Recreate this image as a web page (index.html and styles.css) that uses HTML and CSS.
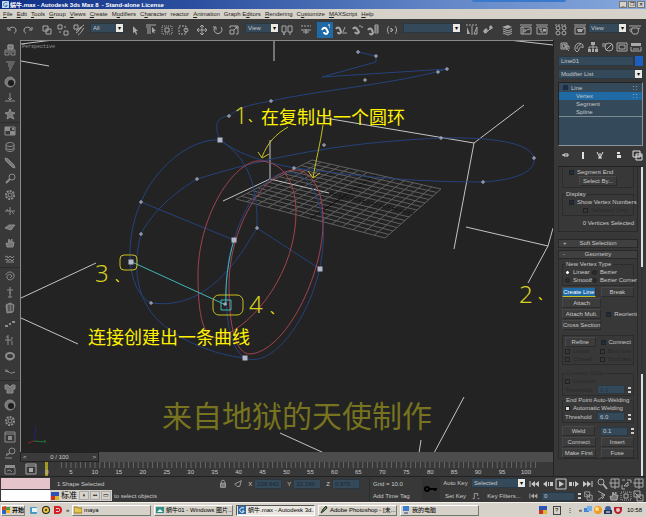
FILE: index.html
```html
<!DOCTYPE html>
<html lang="zh-CN">
<head>
    <meta charset="UTF-8">
    <meta name="viewport" content="width=device-width, initial-scale=1.0">
    <title>蜗牛.max - Autodesk 3ds Max 8</title>
    <link rel="stylesheet" href="styles.css">
</head>
<body>
    <svg class="sprite" aria-hidden="true">
        <symbol id="i-undo" viewBox="0 0 12 12"><path d="M3 5 C5 2 10 3 10 6 C10 8 9 9 8 9 M2 3 V6 H5"/></symbol>
        <symbol id="i-redo" viewBox="0 0 12 12"><path d="M9 5 C7 2 2 3 2 6 C2 8 3 9 4 9 M10 3 V6 H7"/></symbol>
        <symbol id="i-link" viewBox="0 0 12 12"><path d="M2 2 H7 V7 H2Z M5 5 H10 V10 H5Z"/></symbol>
        <symbol id="i-unlink" viewBox="0 0 12 12"><path d="M1 1 H5 V5 H1Z M7 7 H11 V11 H7Z M7 3 L9 3 M3 7 V9"/></symbol>
        <symbol id="i-bind" viewBox="0 0 12 12"><path d="M1 1 H5 V5 H1Z M11 1 C8 2 9 4 7 5 C5 6 6 8 3 9 M11 4 C9 5 10 7 8 8 C7 9 7 10 5 11 M8 3 L3 7"/></symbol>
        <symbol id="i-cursor" viewBox="0 0 12 12"><path class="fill" d="M4 2 L9 7 H7 L8 10 L7 11 L6 8 L4 9Z"/></symbol>
        <symbol id="i-byname" viewBox="0 0 12 12"><path d="M1 1 H11 M1 3 H6 M2 5 H6 M2 7 H6 M2 9 H6"/><path class="fill" d="M7 3 L11 7 L9 7 L10 10 L8 8 L7 9Z"/></symbol>
        <symbol id="i-region" viewBox="0 0 12 12"><path stroke-dasharray="1 1" d="M1 2 H11 V10 H1Z"/><path d="M4 4 H8 V8 H4Z"/></symbol>
        <symbol id="i-window" viewBox="0 0 12 12"><path stroke-dasharray="2 1" d="M2 2 H9 V10 H2Z"/><circle cx="9" cy="6" r="2"/></symbol>
        <symbol id="i-move" viewBox="0 0 12 12"><path d="M6 1 V11 M1 6 H11 M4 3 L6 1 L8 3 M4 9 L6 11 L8 9 M3 4 L1 6 L3 8 M9 4 L11 6 L9 8"/></symbol>
        <symbol id="i-rotate" viewBox="0 0 12 12"><path d="M3 3 A4 4 0 1 0 9 3 M1 3 H4 V6"/></symbol>
        <symbol id="i-scale" viewBox="0 0 12 12"><path d="M2 6 H6 V10 H2Z M2 4 V2 H10 V10 H8 M6 6 L9 3 M7 3 H9 V5"/></symbol>
        <symbol id="i-pivot" viewBox="0 0 12 12"><path d="M1 2 H5 V8 H1Z M7 2 H11 V8 H7Z M3 8 V11 M9 8 V11 M2 10 H4"/></symbol>
        <symbol id="i-manip" viewBox="0 0 12 12"><path stroke-dasharray="2 1" d="M1 2 H11"/><path d="M1 6 H11 M3 8 H9 M6 5 V10"/></symbol>
        <symbol id="i-snap" viewBox="0 0 12 12"><path class="thick" d="M3 6 C4 3 7 3 8 6 L9 8 C8 11 5 10 5 8"/><path d="M9 1 H11 M10 3 H11"/></symbol>
        <symbol id="i-angle" viewBox="0 0 12 12"><path class="thick" d="M1 5 C2 3 4 3 5 5 L6 8 C5 10 3 10 3 8"/><path d="M7 9 H12 M8 8 L10 3"/></symbol>
        <symbol id="i-percent" viewBox="0 0 12 12"><path class="thick" d="M2 5 C3 3 5 3 6 5 L8 8 C7 10 5 10 4 8"/><path d="M9 1 V3 M11 2 V4"/></symbol>
        <symbol id="i-spinsnap" viewBox="0 0 12 12"><path class="thick" d="M1 6 C2 4 4 4 5 6 L6 9 C5 11 3 11 3 9"/><path d="M8 1 H11 V9 H8Z M8 3 H11 M8 5 H11 M8 7 H11"/></symbol>
        <symbol id="i-sets" viewBox="0 0 12 12"><path d="M3 2 C1 4 1 8 3 10 M9 2 C11 4 11 8 9 10 M5 4 V8 L7 6Z"/></symbol>
        <symbol id="i-mirror" viewBox="0 0 12 12"><path stroke-dasharray="2 1" d="M0 1 H12"/><path d="M6 2 V11 M11 3 V10 H8Z"/><path class="fill" d="M1 3 V10 H4Z"/></symbol>
        <symbol id="i-align" viewBox="0 0 12 12"><path class="fill" d="M1 7 L4 4 L6 6 L3 10Z M7 3 L9 1 L11 4 L8 6Z"/><path d="M4 9 L8 5"/></symbol>
        <symbol id="i-layers" viewBox="0 0 12 12"><path class="fill" d="M1 3 L7 1 L11 3 L6 5Z"/><path d="M2 5 L7 7 L11 5 M2 7 L7 9 L11 7 M2 9 L7 11 L11 9"/></symbol>
        <symbol id="i-curves" viewBox="0 0 12 12"><path d="M0 1 H12 M1 3 H11 V10 H1Z M3 3 V10 M3 8 C6 8 6 5 10 5 M3 6 H6"/></symbol>
        <symbol id="i-schem" viewBox="0 0 12 12"><path d="M0 1 H12 M1 3 H11 V10 H1Z M3 5 H6 M7 7 H10 M5 5 V8 H7"/><path class="fill" d="M7 5 H10 V7 H7Z"/></symbol>
        <symbol id="i-mtl" viewBox="0 0 12 12"><path stroke-dasharray="2 1" d="M0 1 H12"/><circle cx="3" cy="4" r="2"/><circle cx="9" cy="4" r="2"/><circle cx="3" cy="9" r="2"/><circle cx="9" cy="9" r="2"/></symbol>
        <symbol id="i-render" viewBox="0 0 12 12"><path d="M0 1 H12 M1 3 H11 V10 H1Z M9 5 L11 4"/><path class="fill" d="M3 5 H9 L8 8 H4Z"/></symbol>
        <symbol id="i-teapot" viewBox="0 0 12 12"><path d="M0 2 H12 M3 4 H9 C10 7 9 9 8 10 H4 C3 9 2 7 3 4Z M9 5 L11 4 M3 5 C0 4 0 8 3 8"/></symbol>
        <symbol id="i-cubes" viewBox="0 0 12 12"><path class="soft" d="M4 1 H9 V5 H4Z"/><path d="M4 1 H9 V5 H4Z M1 6 H5 V11 H1Z M7 6 H11 V11 H7Z M2 8 H4 M8 8 H10"/></symbol>
        <symbol id="i-flag" viewBox="0 0 12 12"><path d="M2 2 H11 M4 4 H10 M4 6 H9 M5 8 H8 M5 10 H7"/></symbol>
        <symbol id="i-ball" viewBox="0 0 12 12"><circle class="soft" cx="6" cy="6" r="5"/><circle class="dark" cx="7" cy="7" r="3"/></symbol>
        <symbol id="i-pin" viewBox="0 0 12 12"><path d="M6 1 V8 M1 9 H11 M4 6 L6 8 L8 6"/></symbol>
        <symbol id="i-star" viewBox="0 0 12 12"><path class="soft" d="M6 1 L7 4 L11 5 L8 7 L10 11 L6 9 L3 11 L4 7 L1 5 L5 4Z"/></symbol>
        <symbol id="i-tiles" viewBox="0 0 12 12"><path d="M1 2 H11 V10 H1Z"/><path class="fill" d="M1 2 H6 V6 H1Z M6 6 H11 V10 H6Z M8 3 H10 V5 H8Z"/></symbol>
        <symbol id="i-barrel" viewBox="0 0 12 12"><path d="M2 3 C4 1 9 1 10 3 V9 C8 11 4 11 2 9Z M2 4 C4 6 8 6 10 4 M2 7 C4 9 8 9 10 7"/></symbol>
        <symbol id="i-brush" viewBox="0 0 12 12"><path class="soft" d="M1 1 L4 2 L10 8 L11 11 L8 10 L2 4Z"/></symbol>
        <symbol id="i-wrench" viewBox="0 0 12 12"><circle cx="8" cy="4" r="3"/><path class="thick" d="M6 6 L2 10"/></symbol>
        <symbol id="i-gear" viewBox="0 0 12 12"><circle class="thick" stroke-dasharray="2 1" cx="6" cy="6" r="4"/><circle cx="6" cy="6" r="2"/></symbol>
        <symbol id="i-axis" viewBox="0 0 12 12"><path d="M1 6 H11 M6 2 V10 M3 4 L4 6 M8 7 L10 9"/></symbol>
        <symbol id="i-leaf" viewBox="0 0 12 12"><path class="soft" d="M1 7 L5 4 H11 L7 9Z"/></symbol>
        <symbol id="i-hand" viewBox="0 0 12 12"><path class="soft" d="M3 10 L2 6 L4 7 L5 2 L6 5 L8 2 L8 6 L10 5 L9 10Z"/></symbol>
        <symbol id="i-wave" viewBox="0 0 12 12"><path d="M1 4 L3 3 L4 5 L6 3 L8 5 L10 3 M1 7 L3 6 L4 8 L6 6 L8 8 L10 6 M2 9 H10"/></symbol>
        <symbol id="i-spiral" viewBox="0 0 12 12"><path d="M2 5 C3 1 9 1 10 5 C11 9 5 12 3 8 C2 5 7 3 8 6 L6 8"/></symbol>
        <symbol id="i-figure" viewBox="0 0 12 12"><path d="M6 1 V11 M3 4 H9 M5 7 H7 M4 11 H8"/></symbol>
        <symbol id="i-cloth" viewBox="0 0 12 12"><path class="soft" d="M2 3 L6 1 L10 3 L9 10 L3 11Z"/><path class="edge" d="M5 3 L5 9 M8 3 V9"/></symbol>
        <symbol id="i-dots" viewBox="0 0 12 12"><path class="fill" d="M1 7 H4 V9 H1Z M5 5 H7 V7 H5Z M8 3 H11 V5 H8Z"/></symbol>
        <symbol id="i-joint" viewBox="0 0 12 12"><path d="M4 1 V11 M1 6 H8 M8 3 V5 M8 7 V11 M2 3 H4"/></symbol>
        <symbol id="i-ring" viewBox="0 0 12 12"><ellipse class="thick" cx="6" cy="6" rx="4" ry="3"/><path d="M3 9 C5 11 9 10 10 7"/></symbol>
        <symbol id="i-rope" viewBox="0 0 12 12"><path d="M1 4 C4 3 5 8 8 7 L11 6 M1 5 L5 6"/></symbol>
        <symbol id="i-shirt" viewBox="0 0 12 12"><path class="soft" d="M1 2 H4 L6 4 L8 2 H11 V6 H9 V10 H3 V6 H1Z"/></symbol>
        <symbol id="i-preview" viewBox="0 0 12 12"><path d="M1 1 H11 V11 H1Z M1 3 H11"/><path class="fill" d="M4 5 H8 V9 H4Z"/></symbol>
        <symbol id="i-search" viewBox="0 0 12 12"><circle cx="8" cy="4" r="3"/><path d="M6 6 L2 9 M1 11 H8 M2 7 H5"/></symbol>
        <symbol id="i-photo" viewBox="0 0 12 12"><path class="fill" d="M1 2 H11 V5 H1Z"/><path d="M1 5 V11 H11 V5 M3 8 L6 7 L8 9"/></symbol>
        <symbol id="i-create" viewBox="0 0 12 12"><path d="M2 2 H8 V8 H2Z M5 4 L10 10 M7 5 H10 V8"/><circle cx="5" cy="5" r="2"/></symbol>
        <symbol id="i-modify" viewBox="0 0 12 12"><path d="M2 9 C1 3 6 0 10 4 L10 7 C8 5 6 6 6 9 L4 11Z M4 8 C4 5 6 3 8 4"/></symbol>
        <symbol id="i-hier" viewBox="0 0 12 12"><path class="fill" d="M4 1 H8 V4 H4Z M1 8 H4 V11 H1Z M5 8 H7 V11 H5Z M8 8 H11 V11 H8Z"/><path d="M6 4 V8 M2 8 V6 H10 V8"/></symbol>
        <symbol id="i-motion" viewBox="0 0 12 12"><circle cx="7" cy="6" r="4"/><path d="M4 9 L10 3 M0 3 H4 M0 5 H3"/></symbol>
        <symbol id="i-display" viewBox="0 0 12 12"><path d="M1 2 H11 V10 H1Z M3 4 H9 V8 H3Z"/></symbol>
        <symbol id="i-util" viewBox="0 0 12 12"><path class="fill" d="M1 2 H11 V5 H1Z"/><path d="M1 6 V10 H11 V6 M3 8 H9"/></symbol>
        <symbol id="i-pinstack" viewBox="0 0 12 12"><path d="M3 6 H5 M5 5 H9 V7 H5Z"/></symbol>
        <symbol id="i-tube" viewBox="0 0 12 12"><path class="thick" d="M6 3 V10"/></symbol>
        <symbol id="i-unique" viewBox="0 0 12 12"><path d="M2 3 L5 9 L8 3 M5 4 V9 M3 9 H7"/></symbol>
        <symbol id="i-trash" viewBox="0 0 12 12"><path class="fill" d="M4 3 H7 V5 H4Z M4 6 H8 V9 H4Z"/></symbol>
        <symbol id="i-config" viewBox="0 0 12 12"><path d="M2 2 H9 V8 H2Z M5 5 H11 V11 H5Z M5 7 H11"/></symbol>
        <symbol id="i-first" viewBox="0 0 12 12"><path d="M1 3 V9"/><path class="fill" d="M2 6 L6 3 V9Z M6 6 L10 3 V9Z"/></symbol>
        <symbol id="i-prev" viewBox="0 0 12 12"><path class="fill" d="M1 6 L5 3 V9Z M6 4 H7 V8 H6Z M8 4 H11 V8 H8Z"/></symbol>
        <symbol id="i-play" viewBox="0 0 12 12"><path d="M1 1 H11 V11 H1Z"/><path class="fill" d="M4 3 L9 6 L4 9Z"/></symbol>
        <symbol id="i-next" viewBox="0 0 12 12"><path class="fill" d="M11 6 L7 3 V9Z M5 4 H6 V8 H5Z M1 4 H4 V8 H1Z"/></symbol>
        <symbol id="i-last" viewBox="0 0 12 12"><path d="M11 3 V9"/><path class="fill" d="M10 6 L6 3 V9Z M6 6 L2 3 V9Z"/></symbol>
        <symbol id="i-zoom" viewBox="0 0 12 12"><circle cx="5" cy="4" r="3"/><path class="thick" d="M7 6 L11 11"/></symbol>
        <symbol id="i-zoomall" viewBox="0 0 12 12"><path d="M3 1 H11 V9 H3Z M7 1 V11 M1 5 H11"/></symbol>
        <symbol id="i-extents" viewBox="0 0 12 12"><path d="M2 2 H5 M7 2 H11 V5 M2 7 V11 H5 M4 8 L8 4 V8Z"/></symbol>
        <symbol id="i-fov" viewBox="0 0 12 12"><path d="M2 1 L9 5 L2 10 M9 5 L5 5 M6 9 L8 7"/></symbol>
        <symbol id="i-abs" viewBox="0 0 12 12"><path d="M2 6 L10 2 L8 9 L5 9Z"/></symbol>
        <symbol id="i-tangent" viewBox="0 0 12 12"><path d="M2 9 H4 V3 H8 V6 M8 9 L10 9"/></symbol>
        <symbol id="i-minmax" viewBox="0 0 12 12"><path d="M2 1 H8 V7 H2Z M5 5 H11 V11 H5Z M3 3 L9 9"/></symbol>
        <symbol id="i-lock" viewBox="0 0 12 12"><path d="M4 5 V3 C4 1 8 1 8 3 V5"/><path class="soft" d="M3 5 H9 V10 H3Z"/></symbol>
    </svg>

    <header class="titlebar">
        <svg class="app-icon" viewBox="0 0 8 8"><rect width="8" height="8" rx="1" fill="#c7dcf0"/><path d="M6 2 C3 1 1 3 2 5 C3 7 6 7 6 5 H4" fill="none" stroke="#1b6aa0"/></svg>
        <h1>蜗牛.max - Autodesk 3ds Max 8 &nbsp;- Stand-alone License</h1>
        <span class="dock"></span>
        <div class="win-buttons">
            <button aria-label="Minimize">_</button>
            <button aria-label="Restore">❐</button>
            <button aria-label="Close">✕</button>
        </div>
    </header>

    <nav class="menubar">
        <button><u>F</u>ile</button>
        <button><u>E</u>dit</button>
        <button><u>T</u>ools</button>
        <button><u>G</u>roup</button>
        <button><u>V</u>iews</button>
        <button><u>C</u>reate</button>
        <button>M<u>o</u>difiers</button>
        <button>C<u>h</u>aracter</button>
        <button>reactor</button>
        <button><u>A</u>nimation</button>
        <button>Graph E<u>d</u>itors</button>
        <button><u>R</u>endering</button>
        <button>C<u>u</u>stomize</button>
        <button><u>M</u>AXScript</button>
        <button><u>H</u>elp</button>
    </nav>

    <div class="toolbar">
        <div class="tools" data-icons="undo redo"></div>
        <div class="tools" data-icons="link unlink bind"></div>
        <div class="combo combo-s"><select aria-label="Selection filter"><option>All</option></select></div>
        <div class="tools" data-icons="cursor byname region window"></div>
        <div class="tools" data-icons="move rotate scale"></div>
        <div class="tools">
            <div class="combo combo-s"><select aria-label="Reference coordinate system"><option>View</option></select></div>
            <button class="tool" aria-label="pivot"><svg><use href="#i-pivot"/></svg></button>
        </div>
        <div class="tools" data-icons="manip"></div>
        <div class="tools" data-icons="snap angle percent spinsnap" data-active="snap"></div>
        <div class="tools" data-icons="sets"></div>
        <div class="combo combo-l"><select aria-label="Named selection sets"><option></option></select></div>
        <div class="tools" data-icons="mirror align"></div>
        <div class="tools" data-icons="layers"></div>
        <div class="tools" data-icons="curves schem"></div>
        <div class="tools" data-icons="mtl"></div>
        <div class="tools">
            <button class="tool" aria-label="render"><svg><use href="#i-render"/></svg></button>
            <div class="combo combo-m"><select aria-label="Render type"><option>View</option></select></div>
            <button class="tool" aria-label="quick render"><svg><use href="#i-teapot"/></svg></button>
        </div>
    </div>

    <main class="workspace">
        <aside class="reactor-bar">
            <div class="tools" data-icons="cubes flag ball pin star"></div>
            <div class="tools" data-icons="tiles barrel brush wrench gear axis leaf hand wave"></div>
            <div class="tools" data-icons="spiral figure cloth dots joint ring rope"></div>
            <div class="tools" data-icons="shirt ball gear preview search photo"></div>
        </aside>

        <section class="center">
            <svg class="viewport" viewBox="21 41 532 412" preserveAspectRatio="xMinYMin slice">
                <text class="view-label" x="22" y="48">Perspective</text>
                <g id="grid" class="grid"></g>
                <path class="white" d="M21 44 L53 40 M21 61 L49 66 M274 40 V61 M270 140 V179 M223 201 L270 179 L329 193 M325 118 L474 143 L454 249 M474 143 L524 105 M500 39 L553 45 M466 227 L548 246 L553 228 M548 246 L528 283 M21 298 L96 263 M21 318 L78 344 M280 433 L324 453 M464 397 L434 453 M421 440 L419 453"/>
                <path class="blue" d="M220 140 C190 138 155 168 141 202 C124 240 126 290 151 303 M220 140 C212 122 220 116 229 116 C240 106 255 104 271 101 C320 90 395 84 447 69 L322 77 L376 62 L376 56 L358 52 M220 140 C240 156 270 163 294 168 C340 173 395 182 483 182 C515 180 536 172 534 158 C530 142 490 137 441 138 C380 141 300 147 197 179 C165 198 148 220 141 234 C130 275 140 310 170 330 C195 348 225 356 245 358"/>
                <path class="blue" d="M220 140 C245 156 258 180 257 228 L320 269 M257 228 C235 265 205 310 151 303 M141 202 L234 240 M245 358 C222 345 222 270 234 240 C242 210 260 184 275 176 C305 160 330 200 322 255 C315 310 275 370 245 358"/>
                <path class="red" d="M257 161 C230 165 198 220 198 275 C198 315 203 342 220 337 C255 325 297 270 296 210 C295 178 280 160 257 161Z M294 170 C262 172 229 230 229 285 C229 325 235 354 250 354 C285 352 324 275 323 220 C323 190 312 170 294 170Z"/>
                <path class="cyan" d="M132 262 L226 305 M234 240 C228 260 225 285 226 305 M221 300 H231 V310 H221Z"/>
                <g id="knots" class="knots"></g>
                <path class="pen" d="M288 127 C276 134 268 142 262 157 M258 152 L262 158 L269 154 M323 125 C320 145 316 160 313 178 M308 171 L313 178 L320 173"/>
                <rect class="pen" x="120" y="255" width="17" height="15" rx="4"/>
                <rect class="pen" x="213" y="295" width="30" height="20" rx="6"/>
                <text class="hand" x="234" y="124">1</text>
                <text class="mark" x="248" y="122">、</text>
                <text class="note" x="261" y="124">在复制出一个圆环</text>
                <text class="hand" x="519" y="303">2</text>
                <text class="mark" x="538" y="300">、</text>
                <text class="hand" x="95" y="282">3</text>
                <text class="mark" x="115" y="282">、</text>
                <text class="hand" x="249" y="313">4</text>
                <text class="mark" x="270" y="314">、</text>
                <text class="note" x="88" y="344">连接创建出一条曲线</text>
                <text class="credit" x="162" y="427">来自地狱的天使制作</text>
                <path d="M34 441 L36 426" stroke="#22227a"/><path d="M34 441 L46 442 L44 440" stroke="#1f7a35" fill="none"/><path d="M34 441 L28 443" stroke="#8c2020"/>
            </svg>
            <div class="time-slider">
                <div class="slider-thumb"><button aria-label="Previous frame">&lt;</button><span>0 / 100</span><button aria-label="Next frame">&gt;</button></div>
            </div>
            <div class="trackbar">
                <button class="tool" aria-label="Mini curve editor"><svg><use href="#i-preview"/></svg></button>
                <div id="ruler" class="ruler"></div>
            </div>
        </section>

        <aside class="panel">
            <div class="tools tabs" data-icons="create modify hier motion display util"></div>
            <div class="name-row">
                <input class="field" type="text" value="Line01" aria-label="Object name">
                <button class="swatch" aria-label="Object color"></button>
            </div>
            <div class="combo"><select aria-label="Modifier list"><option>Modifier List</option></select></div>
            <ul class="stack">
                <li><span class="expand"></span>Line<i>∷</i></li>
                <li class="sub active">Vertex<i>∷</i></li>
                <li class="sub">Segment</li>
                <li class="sub">Spline</li>
            </ul>
            <div class="tools stack-tools" data-icons="pinstack tube unique trash config"></div>
            <div class="rollouts">
                <div class="rollout-list">
                    <div class="rollout selection">
                        <div class="group open">
                            <label class="check"><input type="checkbox">Segment End</label>
                            <button class="btn select-by">Select By...</button>
                        </div>
                        <fieldset class="group">
                            <legend>Display</legend>
                            <label class="check"><input type="checkbox">Show Vertex Numbers</label>
                            <label class="check indent off"><input type="checkbox" disabled>Selected Only</label>
                        </fieldset>
                        <p class="count">0 Vertices Selected</p>
                    </div>
                    <button class="rollout-head"><span>+</span>Soft Selection</button>
                    <button class="rollout-head"><span>-</span>Geometry</button>
                    <div class="rollout geometry">
                        <fieldset class="group">
                            <legend>New Vertex Type</legend>
                            <div class="pair">
                                <label class="check"><input type="radio" name="vt" checked>Linear</label>
                                <label class="check"><input type="radio" name="vt">Bezier</label>
                                <label class="check"><input type="radio" name="vt">Smooth</label>
                                <label class="check"><input type="radio" name="vt">Bezier Corner</label>
                            </div>
                        </fieldset>
                        <div class="two">
                            <button class="btn marked">Create Line</button>
                            <button class="btn">Break</button>
                        </div>
                        <div class="two">
                            <div class="col">
                                <button class="btn">Attach</button>
                                <button class="btn">Attach Mult.</button>
                                <button class="btn">Cross Section</button>
                            </div>
                            <label class="check"><input type="checkbox">Reorient</label>
                        </div>
                        <div class="group boxed">
                            <div class="two">
                                <button class="btn">Refine</button>
                                <label class="check"><input type="checkbox">Connect</label>
                            </div>
                            <div class="two off">
                                <label class="check"><input type="checkbox" disabled>Linear</label>
                                <label class="check"><input type="checkbox" disabled>Bind first</label>
                            </div>
                            <div class="two off">
                                <label class="check"><input type="checkbox" disabled>Closed</label>
                                <label class="check"><input type="checkbox" disabled>Bind last</label>
                            </div>
                        </div>
                        <fieldset class="group off">
                            <legend>Connect Copy</legend>
                            <label class="check"><input type="checkbox" disabled>Connect</label>
                            <label class="spin">Threshold<input class="field" type="text" value="0.1" disabled></label>
                        </fieldset>
                        <fieldset class="group">
                            <legend>End Point Auto-Welding</legend>
                            <label class="check"><input type="checkbox" checked>Automatic Welding</label>
                            <label class="spin">Threshold<input class="field" type="text" value="6.0"></label>
                        </fieldset>
                        <div class="two weld">
                            <button class="btn">Weld</button>
                            <label class="spin"><input class="field" type="text" value="0.1" aria-label="Weld threshold"></label>
                        </div>
                        <div class="two">
                            <button class="btn">Connect</button>
                            <button class="btn">Insert</button>
                        </div>
                        <div class="two">
                            <button class="btn">Make First</button>
                            <button class="btn">Fuse</button>
                        </div>
                    </div>
                </div>
                <div class="scroll"></div>
            </div>
        </aside>
    </main>

    <footer class="status">
        <div class="listener">
            <input class="macro" type="text" aria-label="Macro recorder">
            <input type="text" aria-label="MAXScript listener">
        </div>
        <div class="prompts">
            <div class="coords">
                <span class="selected">1 Shape Selected</span>
                <svg class="small-icon"><use href="#i-lock"/></svg>
                <svg class="small-icon"><use href="#i-abs"/></svg>
                <label>X<input class="field" type="text" value="226.642"></label>
                <label>Y<input class="field" type="text" value="32.199"></label>
                <label>Z<input class="field" type="text" value="0.975"></label>
            </div>
            <div class="hint">
                <span class="ime">
                    <b class="ime-logo"></b><button class="wide">标准</button><button>◗</button><button>••</button><button>▭</button>
                </span>
                <span>to select objects</span>
            </div>
        </div>
        <div class="grid-info"><span>Grid = 10.0</span><span>Add Time Tag</span></div>
        <button class="big-key" aria-label="Set keys"><svg viewBox="0 0 14 8"><circle cx="3" cy="4" r="2" fill="none" stroke="#000" stroke-width="2"/><path d="M5 4 H13 M11 4 V6" stroke="#000" stroke-width="2"/></svg></button>
        <div class="keys">
            <div class="key-row"><button class="plain">Auto Key</button><div class="combo"><select aria-label="Key selection"><option>Selected</option></select></div></div>
            <div class="key-row"><button class="plain">Set Key</button><svg class="small-icon"><use href="#i-tangent"/></svg><button class="plain filters">Key Filters...</button></div>
        </div>
        <div class="transport">
            <div class="tools" data-icons="first prev play next last"></div>
            <div class="frame"><svg class="small-icon"><use href="#i-first"/></svg><label class="spin"><input class="field" type="text" value="0" aria-label="Current frame"></label><svg class="small-icon"><use href="#i-minmax"/></svg></div>
        </div>
        <div class="nav-tools">
            <div class="tools" data-icons="zoom zoomall extents zoomall"></div>
            <div class="tools" data-icons="fov hand region minmax"></div>
        </div>
    </footer>

    <div class="taskbar">
        <button class="start"><svg viewBox="0 0 8 8"><path fill="#d8432b" d="M0 1 L4 0 V4 H0Z"/><path fill="#4aa13c" d="M4 1 H8 V4 H4Z"/><path fill="#2c62c8" d="M0 4 H4 V8 H0Z"/><path fill="#e8b520" d="M4 4 H8 V7 H4Z"/></svg>开始</button>
        <div class="quick">
            <svg viewBox="0 0 8 8"><rect x="0" y="1" width="7" height="7" rx="1" fill="#4a9ac8"/><rect x="2" y="2" width="5" height="4" fill="#e4f2fa"/></svg>
            <svg viewBox="0 0 8 8"><circle cx="4" cy="4" r="4" fill="#222"/><circle cx="4" cy="4" r="3" fill="#e8c238"/><circle cx="4" cy="4" r="1" fill="#222"/></svg>
            <svg viewBox="0 0 8 8"><path d="M1 1 H4 C8 1 8 7 4 7 H1 Z M0 4 H5" fill="none" stroke="#d81f26" stroke-width="2"/></svg>
            <span>»</span>
        </div>
        <div class="tasks">
            <button><svg viewBox="0 0 8 8"><path d="M0 1 H3 L4 2 H8 V7 H0Z" fill="#e6c653" stroke="#9a7a1c"/></svg>maya</button>
            <button><svg viewBox="0 0 8 8"><rect y="1" width="8" height="6" fill="#2a8f86"/><path d="M1 6 L4 3 L7 6Z" fill="#e9f3f1"/></svg>蜗牛01 - Windows 图片...</button>
            <button class="current"><svg viewBox="0 0 8 8"><rect width="8" height="8" fill="#2a6aa6"/><path d="M6 2 C3 1 1 3 2 5 C3 7 6 7 6 5 H4" fill="none" stroke="#fff"/></svg>蜗牛.max - Autodesk 3d...</button>
            <button><svg viewBox="0 0 8 8"><path d="M1 7 L3 3 L6 0 L7 2 L4 5Z" fill="#5a8a3c" stroke="#333"/></svg>Adobe Photoshop - [未...</button>
            <button><svg viewBox="0 0 8 8"><rect x="1" y="0" width="6" height="5" fill="#3a7fd0"/><rect x="2" y="6" width="4" height="2" fill="#7a8aa0"/></svg>我的电脑</button>
        </div>
        <div class="tray">
            <b class="ime-logo"></b>
            <span class="help">?</span>
            <span class="more">⋮</span>
            <span>«</span>
            <svg viewBox="0 0 8 8"><rect x="0" y="2" width="5" height="4" fill="#3f83d2"/><rect x="3" y="0" width="5" height="5" fill="#74aee6"/></svg>
            <svg viewBox="0 0 8 8"><circle cx="4" cy="4" r="4" fill="#f09a28"/><circle cx="3" cy="3" r="2" fill="#fbe08a"/></svg>
            <svg viewBox="0 0 8 8"><circle cx="4" cy="3" r="3" fill="#3c5fa0"/><rect y="4" width="8" height="4" fill="#26385c"/><path d="M2 6 H6" stroke="#fff"/></svg>
            <svg viewBox="0 0 8 8"><path d="M0 1 H8 V4 C8 6 6 8 4 8 C2 8 0 6 0 4Z" fill="#b3202c"/><circle cx="4" cy="4" r="2" fill="#e9c4c8"/></svg>
            <time>10:58</time>
        </div>
    </div>

    <script>
        // Fill the icon strips
        document.querySelectorAll('[data-icons]').forEach(strip => {
            strip.innerHTML = strip.dataset.icons.split(' ').map(name => `
                <button class="tool${strip.dataset.active === name ? ' on' : ''}" aria-label="${name}"><svg><use href="#i-${name}"/></svg></button>
            `).join('');
        });

        // Frame numbers
        const ruler = document.getElementById('ruler');
        for (let frame = 0; frame <= 100; frame += 5) {
            ruler.innerHTML += `<span>${frame}</span>`;
        }

        // Home grid: lines between opposite edges of the quad
        const left = [236, 199], top_ = [312, 160], right = [441, 189], bottom = [385, 238];
        const mix = (a, b, t) => [a[0] + (b[0] - a[0]) * t, a[1] + (b[1] - a[1]) * t];
        const cells = 14;
        let lines = '';
        for (let i = 0; i <= cells; i++) {
            const t = i / cells;
            const cls = i === cells / 2 ? ' class="axis"' : '';
            lines += `<path d="M${mix(left, top_, t)} L${mix(bottom, right, t)}"/>`;
            lines += `<path${cls} d="M${mix(left, bottom, t)} L${mix(top_, right, t)}"/>`;
        }
        // the long axis
        lines += `<path class="axis" d="M${mix(left, top_, 0.5)} L${mix(bottom, right, 0.5)}"/>`;
        document.getElementById('grid').innerHTML = lines;

        // Spline vertices, the big ones are corner knots
        const big = [[220, 140], [234, 240], [320, 269], [245, 358], [131, 262]];
        const small = [[229, 116], [271, 101], [197, 179], [141, 202], [141, 234], [151, 303], [257, 228], [294, 168], [324, 145], [441, 138], [534, 158], [483, 182], [358, 52], [376, 56], [438, 72], [447, 69], [365, 80], [225, 304]];
        document.getElementById('knots').innerHTML =
            big.map(([x, y]) => `<rect x="${x - 2}" y="${y - 2}" width="4" height="4"/>`).join('') +
            small.map(([x, y]) => `<path d="M${x - 2} ${y} H${x + 2} M${x} ${y - 2} V${y + 2}"/>`).join('');
    </script>
</body>
</html>
```
FILE: styles.css
```css
* {
    box-sizing: border-box;
}
body {
    margin: 0;
    height: 100vh;
    display: flex;
    flex-direction: column;
    overflow: hidden;
    background: #383838;
    color: #c8c8c8;
    font-family: "Liberation Sans", "Noto Sans CJK SC", sans-serif;
    font-size: 6px;
    line-height: 8px;
}
button, input, select {
    font: inherit;
    color: inherit;
    margin: 0;
    padding: 0;
    border: 0;
    background: none;
    border-radius: 0;
}
.sprite {
    position: absolute;
    width: 0;
    height: 0;
}
symbol {
    fill: none;
    stroke: currentColor;
    stroke-width: 1px;
}
.fill {
    fill: currentColor;
    stroke: none;
}
.soft {
    fill: #777;
}
.dark {
    fill: #1c1c1c;
    stroke: none;
}
.edge {
    stroke: #333;
}
.thick {
    stroke-width: 2px;
}

/* title and menu */
.titlebar {
    display: flex;
    align-items: center;
    height: 9px;
    flex: none;
    padding: 0 1px 0 2px;
    background: linear-gradient(90deg, #0f2f86, #2c509f 30%, #6488c8 70%, #86a8dc);
    color: #fff;
}
.titlebar h1 {
    margin: 0 0 0 1px;
    font-size: 6px;
    font-weight: bold;
    flex: 1;
    white-space: nowrap;
}
.app-icon {
    width: 7px;
    height: 7px;
}
.dock {
    width: 94px;
    height: 2px;
    margin-right: 53px;
    align-self: flex-start;
    background: #3a78cc;
    border-radius: 0 0 3px 3px;
}
.win-buttons {
    display: flex;
    gap: 1px;
}
.win-buttons button {
    width: 8px;
    height: 7px;
    background: #d6d2c9;
    border: 1px solid #777;
    color: #000;
    font-size: 5px;
    line-height: 5px;
    overflow: hidden;
}
.menubar {
    display: flex;
    flex: none;
    height: 10px;
    padding-left: 3px;
    gap: 4px;
    background: #d6d2c9;
    color: #222;
}

/* toolbar */
.toolbar {
    display: flex;
    align-items: center;
    flex: none;
    gap: 3px;
    height: 21px;
    padding-left: 4px;
    background: #3a3a3a;
}
.tools {
    display: flex;
    align-items: center;
}
.tool {
    display: flex;
    align-items: center;
    justify-content: center;
    width: 16px;
    height: 16px;
    color: #a8a8a8;
}
.tool svg {
    width: 12px;
    height: 12px;
}
.tool.on {
    background: #1f6aa5;
    color: #fff;
}
.combo {
    position: relative;
    height: 10px;
}
.combo select {
    display: block;
    width: 100%;
    height: 10px;
    padding-left: 2px;
    appearance: none;
    background: #34495a;
    border: 1px solid #2a3844;
}
.combo::after {
    content: "▾";
    position: absolute;
    top: 1px;
    right: 1px;
    width: 7px;
    height: 8px;
    background: #ece9e2;
    color: #000;
    font-family: "DejaVu Sans", sans-serif;
    text-align: center;
    pointer-events: none;
}
.toolbar .combo {
    margin-bottom: 4px;
}
.combo-s {
    width: 34px;
}
.combo-m {
    width: 39px;
}
.combo-l {
    width: 58px;
}
.field {
    height: 10px;
    min-width: 0;
    padding-left: 2px;
    background: #34495a;
    border: 1px solid #2a3844;
}

/* workspace */
.workspace {
    display: flex;
    flex: 1;
    min-height: 0;
}
.reactor-bar {
    width: 20px;
    padding: 2px 0 0;
    flex: none;
}
.reactor-bar .tools {
    flex-direction: column;
    border-bottom: 1px solid #2c2c2c;
}
.reactor-bar .tools:last-child {
    border-bottom: 0;
}
.reactor-bar .tool {
    color: #8c8c8c;
}
.center {
    display: flex;
    flex-direction: column;
    flex: 1;
    min-width: 0;
}
.viewport {
    flex: 1;
    min-height: 0;
    width: 100%;
    background: #232323;
    border-left: 1px solid #8a8a8a;
    border-top: 1px solid #8a8a8a;
}
.viewport path {
    stroke-width: 1px;
}
.view-label {
    font-family: "Liberation Mono", monospace;
    font-size: 5px;
    fill: #999;
}
.grid path {
    stroke: #606060;
}
.grid .axis {
    stroke: #0c0c0c;
}
.white {
    fill: none;
    stroke: #c4c4c4;
}
.blue {
    fill: none;
    stroke: #24427c;
}
.red {
    fill: none;
    stroke: #a04450;
}
.cyan {
    fill: none;
    stroke: #3fb8b4;
}
.knots {
    fill: #b4b8c8;
    stroke: #b4b8c8;
}
.pen {
    fill: none;
    stroke: #c8c020;
}
.note, .mark {
    font-family: "Noto Sans CJK SC", sans-serif;
    font-size: 18px;
    fill: #fff200;
}
.mark {
    font-size: 12px;
}
.hand {
    font-family: "Noto Sans", sans-serif;
    font-size: 24px;
    font-weight: 300;
    fill: #d8d020;
}
.credit {
    font-family: "Noto Sans CJK SC", sans-serif;
    font-size: 30px;
    fill: #77731f;
}
.time-slider {
    height: 10px;
    background: #4c4c4c;
}
.slider-thumb {
    display: flex;
    justify-content: space-between;
    width: 79px;
    height: 10px;
    padding: 0 2px;
    background: #3a3a3a;
    border: 1px solid #222;
}
.trackbar {
    display: flex;
    height: 14px;
    padding: 0 15px 0 3px;
}
.trackbar .tool {
    flex: none;
    height: 14px;
}
.ruler {
    display: flex;
    flex: 1;
    margin-left: -4px;
}
.ruler span {
    flex: 1;
    width: 0;
    padding-top: 6px;
    text-align: center;
    background: linear-gradient(90deg, transparent 2px, #686868 2px 3px, transparent 3px) 0 0 / 20% 6px repeat-x;
}
.ruler span:first-child {
    background: linear-gradient(#a29a22, #a29a22) center / 3px 100% no-repeat;
}

/* command panel */
.panel {
    display: flex;
    flex-direction: column;
    gap: 3px;
    width: 93px;
    flex: none;
    padding: 0 3px 0 4px;
    border-left: 1px solid #222;
}
.panel > * {
    flex: none;
}
.tabs {
    justify-content: space-between;
    height: 13px;
}
.tabs .tool, .stack-tools .tool {
    width: 13px;
    height: 12px;
}
.name-row {
    display: flex;
    gap: 1px;
}
.name-row .field {
    flex: 1;
}
.swatch {
    width: 8px;
    height: 10px;
    background: #1d5fc0;
}
.stack {
    height: 64px;
    margin: 0;
    padding: 1px 0;
    list-style: none;
    background: #34495a;
    border: 1px solid #8a949c;
    border-left-color: #222;
    border-top-color: #222;
}
.stack li {
    display: flex;
    height: 8px;
    padding: 0 4px;
}
.stack li i {
    margin-left: auto;
    font-style: normal;
}
.stack .sub {
    padding-left: 17px;
}
.stack .active {
    background: #1f6aa5;
}
.stack li:last-child {
    height: 9px;
    border-bottom: 1px solid #7c8a94;
}
.expand {
    width: 5px;
    height: 5px;
    margin: 1px 3px 0 0;
    background: #1c2c48;
}
.stack-tools {
    height: 12px;
    justify-content: space-between;
}
.stack-tools .tool {
    color: #e0e0e0;
}
.panel .rollouts {
    display: flex;
    flex: 1;
    min-height: 0;
    gap: 3px;
    margin-top: 2px;
    border-top: 1px solid #222;
}
.rollout-list {
    flex: 1;
    overflow: hidden;
}
.scroll {
    width: 2px;
    background: linear-gradient(#ddd 100px, #333 100px 207px, #ddd 207px);
}
.rollout {
    padding: 0 3px;
    border: 1px solid #2a2a2a;
    border-top: 0;
}
.selection {
    height: 65px;
    margin-bottom: 7px;
}
.rollout-head {
    display: flex;
    justify-content: center;
    position: relative;
    width: 100%;
    height: 9px;
    margin-bottom: 2px;
    background: #404040;
    border: 1px solid #282828;
    line-height: 7px;
}
.rollout-head span {
    position: absolute;
    left: 4px;
}
.group {
    margin: 0;
    padding: 0 2px 1px;
    min-width: 0;
    border: 1px solid #2c2c2c;
}
.group legend {
    padding: 0 1px;
    line-height: 7px;
    white-space: nowrap;
}
.open {
    display: flex;
    flex-direction: column;
    border-top: 0;
    padding-top: 1px;
    margin-bottom: 3px;
}
.check {
    display: flex;
    align-items: center;
    gap: 3px;
    height: 8px;
    white-space: nowrap;
}
.check input {
    appearance: none;
    width: 5px;
    height: 5px;
    margin: 0;
    background: #1f2c48;
    border: 1px solid #222;
    flex: none;
}
.check input[type="radio"] {
    border-radius: 50%;
    background: #2c2c2c;
}
.check input[type="radio"]:checked {
    background: #fff;
}
.check input[type="checkbox"]:checked {
    background: #ddd;
}
.selection .check {
    padding-left: 4px;
}
.selection .indent {
    padding-left: 18px;
}
.off {
    color: #2a2a2a;
}
.off .check input, .off.check input {
    background: #383838;
}
.off .field {
    color: #24323e;
}
.btn {
    height: 10px;
    background: #3c3c3c;
    border: 1px solid #2c2c2c;
    border-top-color: #484848;
    border-left-color: #484848;
    line-height: 8px;
    white-space: nowrap;
}
.select-by {
    width: 38px;
    align-self: center;
}
.count {
    margin: 3px 0 0;
    text-align: right;
}
.geometry {
    display: flex;
    flex-direction: column;
    gap: 1px;
    margin-top: -2px;
    padding-top: 2px;
}
.pair {
    display: grid;
    grid-template-columns: 27px 1fr;
}
.two, .col {
    display: grid;
    gap: 1px 5px;
    align-items: center;
}
.two {
    grid-template-columns: 1fr 1fr;
}
.marked {
    background: #1f6aa5;
    color: #fff;
    border-bottom-color: #c8c020;
}
.boxed {
    margin: 4px 0;
    padding-top: 1px;
}
.spin {
    display: flex;
    align-items: center;
    justify-content: space-between;
    gap: 3px;
}
.spin .field {
    width: 28px;
    height: 9px;
    margin-left: auto;
}
.spin::after {
    content: "";
    width: 3px;
    height: 6px;
    background: linear-gradient(#ccc 2px, transparent 2px 4px, #ccc 4px);
}
.weld {
    margin-top: 2px;
}

/* status */
.status {
    display: flex;
    flex: none;
    height: 26px;
    padding: 1px 2px 1px 0;
    gap: 3px;
    border-top: 1px solid #222;
}
.listener {
    display: flex;
    flex-direction: column;
    gap: 1px;
    width: 50px;
    padding-left: 1px;
    flex: none;
}
.listener input {
    height: 11px;
    width: 100%;
    background: #fff;
}
.listener .macro {
    background: #e6c4cc;
}
.prompts {
    flex: 1;
    display: flex;
    flex-direction: column;
    gap: 1px;
}
.coords {
    display: flex;
    align-items: center;
    gap: 5px;
    height: 11px;
    padding: 0 6px 0 4px;
}
.selected {
    margin-right: auto;
}
.coords label {
    display: flex;
    align-items: center;
    gap: 2px;
}
.coords .field {
    width: 28px;
    color: #1b2731;
}
.small-icon {
    width: 10px;
    height: 10px;
    color: #a8a8a8;
    flex: none;
}
.hint {
    display: flex;
    align-items: center;
    gap: 2px;
    margin-left: -3px;
}
.ime {
    display: flex;
    gap: 1px;
    height: 11px;
    padding: 1px;
    background: #d6d2c9;
    color: #000;
    align-items: center;
}
.ime button {
    width: 10px;
    height: 9px;
    border: 1px solid #aaa;
    line-height: 7px;
}
.ime .wide {
    width: 18px;
    font-size: 8px;
    border: 0;
    line-height: 9px;
}
.ime-logo {
    width: 8px;
    height: 8px;
    background: conic-gradient(#2a52b8 25%, #e0b428 25% 50%, #c8322a 50% 75%, #2a52b8 75%);
}
.grid-info {
    display: flex;
    flex-direction: column;
    gap: 4px;
    width: 50px;
    padding: 2px 0 0 3px;
    border-left: 1px solid #2c2c2c;
}
.big-key {
    width: 18px;
    background: #333;
}
.big-key svg {
    width: 14px;
    height: 8px;
}
.keys {
    display: flex;
    flex-direction: column;
    gap: 2px;
    width: 83px;
}
.key-row {
    display: flex;
    align-items: center;
    gap: 3px;
    height: 11px;
}
.key-row .combo {
    flex: 1;
}
.plain {
    width: 25px;
    white-space: nowrap;
}
.filters {
    width: 40px;
}
.transport {
    width: 64px;
}
.transport .tools, .nav-tools .tools {
    height: 12px;
}
.transport .tool {
    width: 13px;
    color: #c8c8c8;
}
.frame {
    display: flex;
    gap: 2px;
    height: 12px;
    align-items: center;
}
.frame .spin {
    flex: 1;
}
.frame .spin .field {
    flex: 1;
}
.nav-tools .tool {
    width: 12px;
    height: 12px;
}

/* windows taskbar */
.taskbar {
    display: flex;
    align-items: center;
    flex: none;
    height: 15px;
    padding: 1px 4px 1px 1px;
    background: #d6d2c9;
    color: #000;
    border-top: 1px solid #f2f0ea;
}
.taskbar svg {
    width: 8px;
    height: 8px;
    flex: none;
}
.start {
    display: flex;
    align-items: center;
    gap: 2px;
    height: 11px;
    width: 24px;
    border: 1px solid #8a8780;
    border-top-color: #fff;
    border-left-color: #fff;
    font-weight: bold;
}
.quick {
    display: flex;
    gap: 4px;
    width: 47px;
    padding-left: 5px;
}
.tasks {
    display: flex;
    gap: 3px;
    flex: 1;
}
.tasks button {
    display: flex;
    align-items: center;
    gap: 2px;
    height: 11px;
    flex: 0 1 79px;
    min-width: 0;
    padding: 0 1px;
    overflow: hidden;
    border: 1px solid #77746e;
    border-top-color: #fff;
    border-left-color: #fff;
    white-space: nowrap;
}
.tasks .current {
    background: #ebe8e2;
    border-color: #fff;
    border-top-color: #555;
    border-left-color: #555;
}
.tray {
    display: flex;
    align-items: center;
    gap: 2px;
}
.tray time {
    margin-left: 3px;
}
.help {
    width: 8px;
    margin-left: 4px;
    border: 1px solid #444;
    line-height: 7px;
    text-align: center;
}
.more {
    margin: 0 4px;
}
```
